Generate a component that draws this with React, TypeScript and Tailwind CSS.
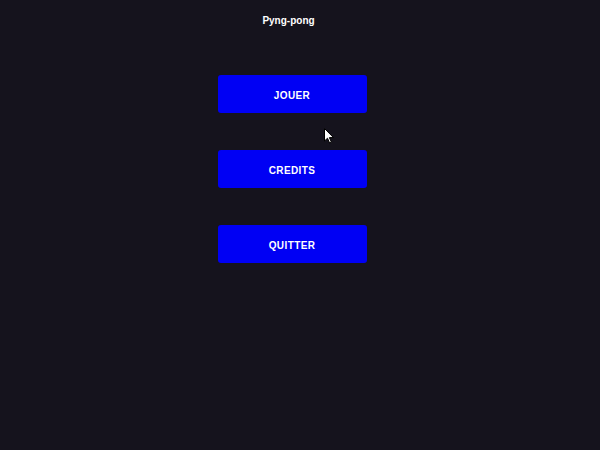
export default function App() {
  const items = ["JOUER", "CREDITS", "QUITTER"];
  return (
    <div
      className="relative w-[600px] h-[450px] bg-[#15131d] overflow-hidden"
      style={{ fontFamily: '"Liberation Sans", Arial, sans-serif' }}
    >
      <div className="w-[585px] flex flex-col items-center">
        <div className="h-[15px]" />
        <div className="text-[10px] leading-[12px] font-bold text-white pr-[8px]">Pyng-pong</div>
        <div className="flex flex-col items-center gap-[37px] mt-[48px]">
          {items.map((t) => (
            <button
              key={t}
              className="w-[149px] h-[38px] rounded-[3px] bg-[#0000f4] text-white text-[10px] font-bold tracking-[0.4px] flex items-center justify-center pr-[1px] pt-[3px]"
            >
              {t}
            </button>
          ))}
        </div>
      </div>
      <svg
        className="absolute left-[324px] top-[128px]"
        width="11"
        height="17"
        viewBox="0 0 11 17"
      >
        <path d="M0.5 0.5 L0.5 13 L3.5 10.2 L5.6 15 L7.4 14.2 L5.4 9.6 L9.5 9.6 Z" fill="white" stroke="black" strokeWidth="1" />
      </svg>
    </div>
  );
}
